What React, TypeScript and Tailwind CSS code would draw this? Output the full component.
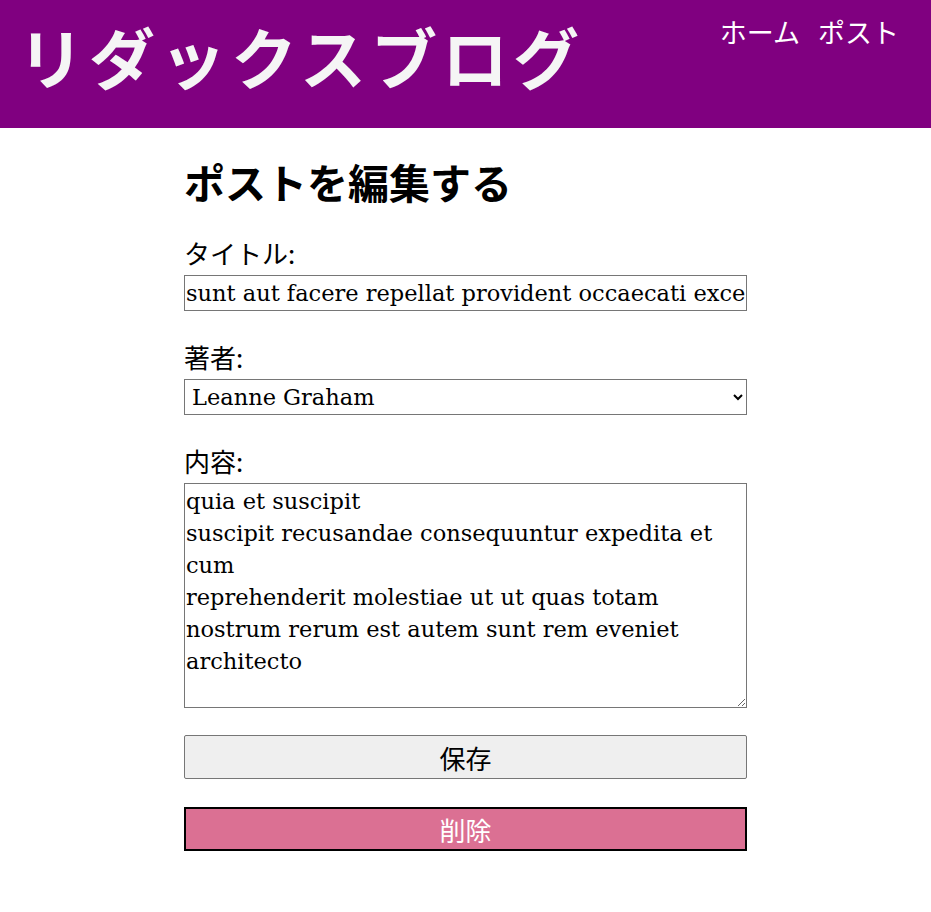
import { useState } from 'react';

const body =
  'quia et suscipit\nsuscipit recusandae consequuntur expedita et cum\nreprehenderit molestiae ut ut quas totam\nnostrum rerum est autem sunt rem eveniet architecto';

export default function App() {
  const [title, setTitle] = useState(
    'sunt aut facere repellat provident occaecati excepturi optio reprehenderit'
  );
  const [author, setAuthor] = useState('1');
  const [content, setContent] = useState(body);

  const jp = "font-['Noto_Sans_CJK_JP',sans-serif]";
  const serif = "font-['DejaVu_Serif','Noto_Sans_CJK_JP',serif]";

  return (
    <div className={`min-h-[912px] bg-white text-black ${jp}`}>
      <header className="flex h-[128px] items-start justify-between bg-[#800080] pl-[18px] pr-[12px]">
        <h1 className="mt-[11px] text-[66px] font-bold leading-[88px] tracking-[5px] text-[#f5f5f5]">
          リダックスブログ
        </h1>
        <nav className="mt-[12px] flex gap-[18px] pr-[20px] text-[27px] leading-[40px] text-white">
          <a href="#">ホーム</a>
          <a href="#">ポスト</a>
        </nav>
      </header>

      <main className="mx-auto w-[563px] pt-[24px]">
        <h2 className="mb-[25px] text-[41px] font-bold leading-[58px]">
          ポストを編集する
        </h2>
        <form className="flex flex-col" onSubmit={(e) => e.preventDefault()}>
          <label htmlFor="title" className="mb-[4px] text-[26px] leading-[36px]">
            タイトル:
          </label>
          <input
            id="title"
            value={title}
            onChange={(e) => setTitle(e.target.value)}
            className={`h-[36px] border border-[#767676] px-[1px] text-[22.5px] ${serif}`}
          />

          <label htmlFor="author" className="mb-[4px] mt-[28px] text-[26px] leading-[36px]">
            著者:
          </label>
          <select
            id="author"
            value={author}
            onChange={(e) => setAuthor(e.target.value)}
            className={`h-[36px] border border-[#767676] bg-white px-[3px] text-[22.5px] ${serif}`}
          >
            <option value="1">Leanne Graham</option>
            <option value="2">Ervin Howell</option>
          </select>

          <label htmlFor="content" className="mb-[4px] mt-[28px] text-[26px] leading-[36px]">
            内容:
          </label>
          <textarea
            id="content"
            value={content}
            onChange={(e) => setContent(e.target.value)}
            className={`h-[225px] border border-[#767676] px-[1px] py-[1px] text-[22.5px] leading-[32px] ${serif}`}
          />

          <button
            type="submit"
            className="mt-[27px] h-[44px] rounded-[2px] border border-[#767676] bg-[#efefef] text-[26px]"
          >
            保存
          </button>
          <button
            type="button"
            className="mt-[28px] h-[44px] border-2 border-black bg-[#db7093] text-[26px] text-white"
          >
            削除
          </button>
        </form>
      </main>
    </div>
  );
}
